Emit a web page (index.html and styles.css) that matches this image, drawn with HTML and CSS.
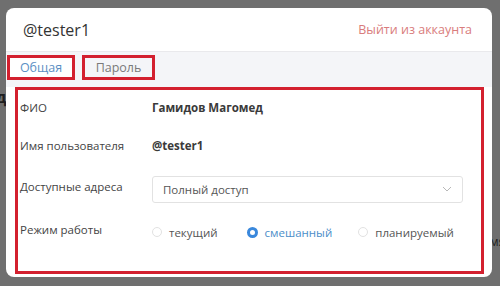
FILE: index.html
```html
<!DOCTYPE html>
<html lang="ru">
<head>
    <meta charset="UTF-8">
    <title>Профиль</title>
    <link rel="stylesheet" href="styles.css">
</head>
<body>
    <div class="backdrop">
        <span class="behind behind-left">Под</span>
        <span class="behind behind-right">Время</span>
    </div>
    <div class="modal">
        <div class="modal-header">
            <span class="user">@tester1</span>
            <a href="#" class="logout">Выйти из аккаунта</a>
        </div>
        <div class="tabs">
            <div class="tab active">Общая</div>
            <div class="tab">Пароль</div>
        </div>
        <div class="content">
            <div class="row row-name">
                <div class="label">ФИО</div>
                <div class="value">Гамидов Магомед</div>
            </div>
            <div class="row row-login">
                <div class="label">Имя пользователя</div>
                <div class="value">@tester1</div>
            </div>
            <div class="row row-access">
                <div class="label">Доступные адреса</div>
                <div class="select">
                    <span>Полный доступ</span>
                    <svg class="chevron" width="10" height="6" viewBox="0 0 10 6"><path d="M1 1l4 4 4-4" fill="none" stroke="#b8b8b8" stroke-width="1"/></svg>
                </div>
            </div>
            <div class="row row-mode">
                <div class="label">Режим работы</div>
                <div class="radios">
                    <label class="radio"><span class="dot"></span>текущий</label>
                    <label class="radio checked"><span class="dot"></span>смешанный</label>
                    <label class="radio"><span class="dot"></span>планируемый</label>
                </div>
            </div>
        </div>
    </div>
</body>
</html>
```

FILE: styles.css
```css
body {
    margin: 0;
    width: 500px;
    height: 286px;
    overflow: hidden;
    background: #6f6f6f;
    font-family: 'Open Sans', 'Noto Sans', sans-serif;
    color: #444;
    position: relative;
}
.backdrop {
    position: absolute;
    inset: 0;
}
.behind {
    position: absolute;
    color: #1e1e1e;
    font-size: 16px;
    font-weight: bold;
}
.behind-left {
    left: -26px;
    top: 86px;
}
.behind-right {
    left: 468px;
    top: 233px;
    font-size: 12px;
    font-weight: normal;
}
.modal {
    position: relative;
    margin: 8px 0 0 6px;
    width: 486px;
    height: 269px;
    background: #fff;
    border-radius: 8px;
    overflow: hidden;
}
.modal-header {
    height: 43px;
    display: flex;
    align-items: center;
    justify-content: space-between;
    padding: 0 20px 0 17px;
    border-bottom: 1px solid #e9e9ec;
}
.user {
    font-size: 16px;
    color: #333;
}
.logout {
    font-size: 12.5px;
    color: #d97c7c;
    text-decoration: none;
}
.tabs {
    height: 35px;
    background: #f4f5f8;
    display: flex;
    gap: 7px;
    padding: 3px 0 0 1px;
    box-sizing: border-box;
}
.tab {
    width: 62px;
    height: 19px;
    border: 3px solid #d3202f;
    font-size: 12.5px;
    color: #7a7a7a;
    display: flex;
    align-items: center;
    justify-content: center;
}
.tab:nth-child(2) {
    width: 67px;
}
.tab.active {
    background: #fff;
    color: #5b8fc4;
}
.content {
    margin: 0 8px 0 9px;
    height: 187px;
    border: 3px solid #d3202f;
    box-sizing: border-box;
    padding: 0 0 0 2px;
}
.row {
    display: flex;
    align-items: center;
    font-size: 11.5px;
}
.row-name { height: 34px; }
.row-login { height: 42px; }
.row-access { height: 40px; }
.row-mode { height: 46px; }
.label {
    width: 132px;
    flex-shrink: 0;
}
.value {
    font-weight: bold;
    color: #3a3a3a;
}
.select {
    width: 311px;
    height: 27px;
    margin-top: 6px;
    border: 1px solid #e2e2e2;
    border-radius: 3px;
    box-sizing: border-box;
    display: flex;
    align-items: center;
    justify-content: space-between;
    padding: 0 10px 0 10px;
    color: #555;
}
.radios {
    display: flex;
    margin-top: 6px;
}
.radio {
    display: flex;
    align-items: center;
    gap: 7px;
    padding: 2px 0;
    margin-right: 29px;
    color: #555;
}
.dot {
    width: 10px;
    height: 10px;
    border-radius: 50%;
    border: 1px solid #e2e2e2;
    box-sizing: border-box;
}
.radio.checked {
    color: #4b8ec9;
    margin-right: 26px;
}
.radio.checked .dot {
    border: 3px solid #3a88dc;
    background: #fff;
    width: 11px;
    height: 11px;
}
```
